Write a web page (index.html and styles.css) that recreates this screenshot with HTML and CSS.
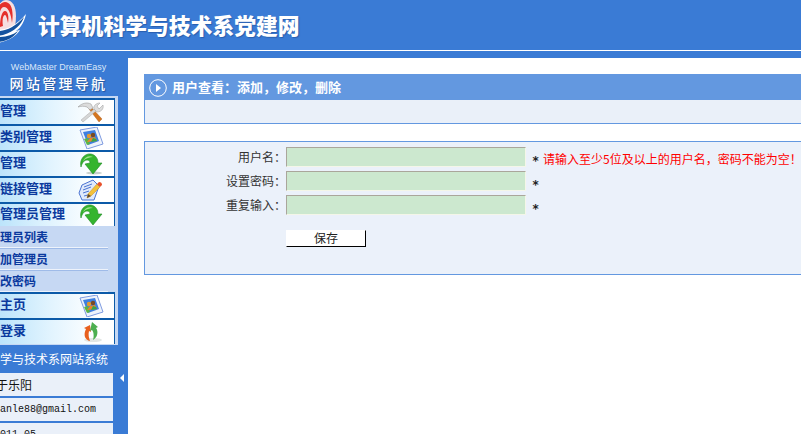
FILE: index.html
```html
<!DOCTYPE html>
<html lang="zh-CN">
<head>
<meta charset="utf-8">
<title>计算机科学与技术系党建网</title>
<link rel="stylesheet" href="styles.css">
</head>
<body>
<header class="top">
  <svg class="logo" viewBox="0 0 30 50" width="30" height="50" aria-hidden="true">
    <path d="M-6 31C-7 10 0 0 6 0C14 0 18 10 15 26L8 30Z" fill="#f6dfe0"/>
    <path d="M-5 28C-6 12 -1 2 5 2C11 2 14 10 12 23C11 13 8 7 4 7C0 7 -2 16 0 27Z" fill="#e5302b"/>
    <path d="M0 27C0 18 2 11 5 11C8 11 9 17 8 23C7 18 6 15 5 15C3 15 2 20 3 26Z" fill="#e5302b"/>
    <path d="M-3 30C6 30 16 26 26 14C24 24 19 29 16 31L20 30C16 36 9 41 -3 43Z" fill="#fff"/>
    <path d="M-2 31C6 31 15 27 24 17C21 25 15 31 3 35L-2 36Z" fill="#15539f"/>
    <path d="M-2 37C6 37 13 35 18 31C14 37 8 41 -2 42Z" fill="#12509c"/>
  </svg>
  <h1 class="site-title">计算机科学与技术系党建网</h1>
</header>
<div class="main">
  <aside class="side">
    <div class="brand">
      <div class="brand-en">WebMaster DreamEasy</div>
      <div class="brand-cn">网站管理导航</div>
    </div>
    <div class="nav">
      <div class="item"><span class="label">用户管理</span>
        <svg class="ico" viewBox="0 0 26 22" aria-hidden="true">
          <path d="M11 8l2-2 11 12-3 3Z" fill="#d4761f" stroke="#a9571a" stroke-width=".4"/>
          <path d="M5 21L3 19 16 8l2 2Z" fill="#d6d6d6" stroke="#979797" stroke-width=".4"/>
          <path d="M25 4c1 4-2 7-6 7l-3-3c-1-3 2-6 6-6l-3 3 2 3Z" fill="#dedede" stroke="#9a9a9a" stroke-width=".5"/>
          <path d="M0 6C4 2 9 1 13 3l2 4-3 2-3-3C6 5 3 5 0 6Z" fill="#dcdcdc" stroke="#8e8e8e" stroke-width=".5"/>
        </svg>
      </div>
      <div class="item"><span class="label">新闻类别管理</span>
        <svg class="ico" viewBox="0 0 26 22" aria-hidden="true">
          <path d="M2 3L19 0l6 17-16 5Z" fill="#eef3fb" stroke="#7f9be0" stroke-width="1"/>
          <path d="M5 5L17 3l4 11-11 4Z" fill="#3f7fe0"/>
          <path d="M6 12l4-1 2 6-3 1Z" fill="#5cb544"/>
          <circle cx="11" cy="9" r="2.2" fill="#e69a2e"/>
          <circle cx="15" cy="8" r="2.2" fill="#7a4a22"/>
          <path d="M9 15l3-4 5-1 2 4Z" fill="#e8862a"/>
          <path d="M13 15l2-4 3 1 1 2Z" fill="#39a548"/>
        </svg>
      </div>
      <div class="item"><span class="label">新闻管理</span>
        <svg class="ico" viewBox="0 0 26 22" aria-hidden="true">
          <ellipse cx="16" cy="20" rx="8" ry="1.5" fill="#c8d0cc"/>
          <path d="M3 14C1 6 7 0 13 1c5 1 7 5 7 9h4L15 21 7 11l5-1c0-2-1-3-3-3-3 0-5 3-6 7Z" fill="#35b42e" stroke="#1f8a25" stroke-width=".6"/>
          <path d="M5 8c2-4 6-6 10-4-3 0-7 1-10 4Z" fill="#a5e590"/>
        </svg>
      </div>
      <div class="item"><span class="label">友情链接管理</span>
        <svg class="ico" viewBox="0 0 26 22" aria-hidden="true">
          <path d="M4 6L15 1l6 6-5 14-12 0-3-7Z" fill="#dfe9fb" stroke="#4b74d2" stroke-width="1"/>
          <path d="M6 8l8-3M5 11l8-3M5 14l6-2M6 17l4-1" stroke="#4b74d2" stroke-width="1"/>
          <path d="M9 19l1-4 9-10 3 3-9 9Z" fill="#f3c13a" stroke="#c98a1b" stroke-width=".5"/>
          <path d="M19 5l2-2c2 0 3 1 3 3l-2 2Z" fill="#e8512c"/>
          <path d="M9 19l1-4 3 2Z" fill="#5a4632"/>
        </svg>
      </div>
      <div class="item item-open"><span class="label">系统管理员管理</span>
        <svg class="ico" viewBox="0 0 26 22" aria-hidden="true">
          <path d="M3 14C1 6 7 0 13 1c5 1 7 5 7 9h4L15 21 7 11l5-1c0-2-1-3-3-3-3 0-5 3-6 7Z" fill="#35b42e" stroke="#1f8a25" stroke-width=".6"/>
          <path d="M5 8c2-4 6-6 10-4-3 0-7 1-10 4Z" fill="#a5e590"/>
        </svg>
      </div>
      <div class="subs">
        <div class="sub">管理员列表</div>
        <div class="sub">添加管理员</div>
        <div class="sub">修改密码</div>
      </div>
      <div class="item"><span class="label">网站主页</span>
        <svg class="ico" viewBox="0 0 26 22" aria-hidden="true">
          <path d="M2 3L19 0l6 17-16 5Z" fill="#eef3fb" stroke="#7f9be0" stroke-width="1"/>
          <path d="M5 5L17 3l4 11-11 4Z" fill="#3f7fe0"/>
          <path d="M6 12l4-1 2 6-3 1Z" fill="#5cb544"/>
          <circle cx="11" cy="9" r="2.2" fill="#e69a2e"/>
          <circle cx="15" cy="8" r="2.2" fill="#7a4a22"/>
          <path d="M9 15l3-4 5-1 2 4Z" fill="#e8862a"/>
          <path d="M13 15l2-4 3 1 1 2Z" fill="#39a548"/>
        </svg>
      </div>
      <div class="item"><span class="label">退出登录</span>
        <svg class="ico" viewBox="0 0 26 22" aria-hidden="true">
          <ellipse cx="15" cy="19" rx="9" ry="2" fill="#e2e6e4"/>
          <path d="M12 20C7 19 5 14 8 8L6 7l6-3 1 7-2-1c-1 4 0 7 1 10Z" fill="#e8601f"/>
          <path d="M14 1l6 5-2 1c3 4 1 10-3 12 1-3 1-8-1-10l-2 1Z" fill="#4caf50"/>
        </svg>
      </div>
    </div>
    <div class="info-head">计算机科学与技术系网站系统</div>
    <div class="info name">于乐阳</div>
    <div class="info mail">yuganle88@gmail.com</div>
    <div class="info date">2011.05</div>
    <div class="toggle"><span class="arrow"></span></div>
  </aside>
  <main class="content">
    <section class="panel">
      <div class="panel-head">
        <svg class="play" viewBox="0 0 18 18" width="18" height="18" aria-hidden="true">
          <circle cx="9" cy="9" r="8.3" fill="none" stroke="#fff" stroke-width="1"/>
          <path d="M7 5l5 4-5 4Z" fill="#fff"/>
        </svg>
        <span class="panel-title">用户查看：添加，修改，删除</span>
      </div>
      <div class="panel-body"></div>
    </section>
    <section class="form">
      <div class="row">
        <label class="lab">用户名：</label><input class="field" type="text"><span class="star">*</span><span class="warn">请输入至少5位及以上的用户名，密码不能为空！</span>
      </div>
      <div class="row">
        <label class="lab">设置密码：</label><input class="field" type="password"><span class="star">*</span>
      </div>
      <div class="row">
        <label class="lab">重复输入：</label><input class="field" type="password"><span class="star">*</span>
      </div>
      <div class="actions"><button class="save" type="button">保存</button></div>
    </section>
  </main>
</div>
</body>
</html>
```

FILE: styles.css
```css
html, body {
  margin: 0;
  padding: 0;
  height: 100%;
  overflow: hidden;
  background: #3a7bd5;
  font-family: "Noto Sans CJK SC", "Liberation Sans", sans-serif;
  font-size: 12px;
}
.top {
  height: 50px;
  display: flex;
  align-items: center;
  background: #3a7bd5;
  border-bottom: 1px solid #fff;
  overflow: hidden;
}
.logo { flex: none; display: block; }
.site-title {
  margin: 0 0 0 8px;
  color: #fff;
  font-size: 21.8px;
  line-height: 50px;
  font-weight: 900;
  white-space: nowrap;
  text-shadow: 1px 1px 1px #2a5fae;
}
.main {
  display: flex;
  height: 383px;
}
.side {
  position: relative;
  flex: none;
  width: 128px;
  overflow: hidden;
  color: #fff;
}
.brand {
  height: 45px;
  box-sizing: border-box;
  padding-top: 11px;
  text-align: center;
  width: 117px;
}
.brand-en {
  font-family: "Liberation Sans", sans-serif;
  font-size: 9px;
  line-height: 11px;
  color: #dbe7f8;
}
.brand-cn {
  margin-top: 2px;
  font-size: 14px;
  font-weight: 500;
  line-height: 16px;
  letter-spacing: 2.3px;
  color: #fff;
  text-shadow: 1px 1px 1px #24559f;
}
.nav {
  width: 118px;
  height: 249px;
  box-sizing: border-box;
  padding-top: 2px;
  background: #c6d8f3;
  overflow: hidden;
}
.item {
  width: 115px;
  height: 26px;
  box-sizing: border-box;
  border-top: 2px solid #0c5aa8;
  border-right: 1px solid #0c5aa8;
  background: linear-gradient(90deg, #bce4fb 0%, #e2f4fe 45%, #fff 85%);
  display: flex;
  align-items: center;
  justify-content: space-between;
  padding-right: 10px;
  overflow: hidden;
}
.item-open { height: 24px; }
.label {
  display: block;
  margin-left: -26px;
  margin-top: -4px;
  color: #0b3a9e;
  font-size: 13px;
  font-weight: 700;
  line-height: 20px;
  white-space: nowrap;
}
.ico {
  flex: none;
  width: 26px;
  height: 22px;
  display: block;
}
.subs { height: 66px; }
.sub {
  height: 22px;
  box-sizing: border-box;
  width: 108px;
  border-bottom: 1px solid #eef3fb;
  box-shadow: 0 1px 0 #9fbbe8;
  color: #0b3a9e;
  font-weight: 700;
  font-size: 12px;
  line-height: 21px;
  white-space: nowrap;
  text-indent: -12px;
}
.info-head {
  height: 28px;
  width: 113px;
  line-height: 27px;
  font-size: 12px;
  color: #fff;
  white-space: nowrap;
  text-indent: -48px;
}
.info {
  width: 113px;
  height: 23px;
  margin-bottom: 2px;
  background: #eaf0f9;
  color: #111;
  line-height: 23px;
  white-space: nowrap;
  overflow: hidden;
}
.name { text-indent: -4px; }
.mail, .date {
  font-family: "Liberation Mono", monospace;
  font-size: 10px;
}
.mail { text-indent: -18px; }
.date { text-indent: -6px; }
.toggle {
  position: absolute;
  left: 118px;
  top: 0;
  width: 10px;
  height: 100%;
}
.arrow {
  position: absolute;
  left: 2px;
  top: 323px;
  width: 0;
  height: 0;
  border-style: solid;
  border-width: 4px 4px 4px 0;
  border-color: transparent #fff transparent transparent;
}
.content {
  flex: 1;
  min-width: 0;
  margin-top: 7px;
  background: #fff;
  padding: 16px;
  overflow: hidden;
}
.panel {
  margin-right: -40px;
  height: 50px;
  box-sizing: border-box;
  border: 1px solid #6398e0;
  background: #eaf0f9;
}
.panel-head {
  height: 25px;
  background: #6398e0;
  display: flex;
  align-items: center;
  padding-left: 4px;
}
.play { flex: none; display: block; }
.panel-title {
  margin-left: 5px;
  margin-top: -2px;
  color: #fff;
  font-size: 13px;
  font-weight: 700;
  white-space: nowrap;
}
.form {
  margin-top: 17px;
  margin-right: -40px;
  height: 134px;
  box-sizing: border-box;
  border: 1px solid #6398e0;
  background: #ebf1fa;
  padding-top: 5px;
}
.row {
  display: flex;
  align-items: center;
  height: 20px;
  margin-bottom: 4px;
}
.lab {
  width: 141px;
  flex: none;
  text-align: right;
  color: #333;
  font-size: 12px;
  line-height: 20px;
}
.field {
  flex: none;
  width: 240px;
  height: 20px;
  box-sizing: border-box;
  margin: 0;
  padding: 0;
  border-style: solid;
  border-width: 1px;
  border-color: #aaa69b #f4f6e8 #f4f6e8 #aaa69b;
  background: #cce8cf;
}
.star {
  margin-left: 6px;
  margin-top: 8px;
  width: 11px;
  flex: none;
  font-family: "DejaVu Sans Mono", monospace;
  font-size: 12px;
  font-weight: 700;
  line-height: 16px;
  color: #222;
}
.warn {
  color: #f00;
  font-size: 12px;
  margin-top: 2px;
  white-space: nowrap;
}
.actions {
  padding-left: 141px;
  margin-top: 15px;
}
.save {
  display: block;
  width: 80px;
  height: 17px;
  box-sizing: border-box;
  margin: 0;
  padding: 0 0 2px;
  border-style: solid;
  border-width: 1px;
  border-color: #fff #000 #000 #fff;
  background: #fff;
  color: #222;
  font-family: "Noto Sans CJK SC", sans-serif;
  font-size: 12px;
  line-height: 13px;
}
```
